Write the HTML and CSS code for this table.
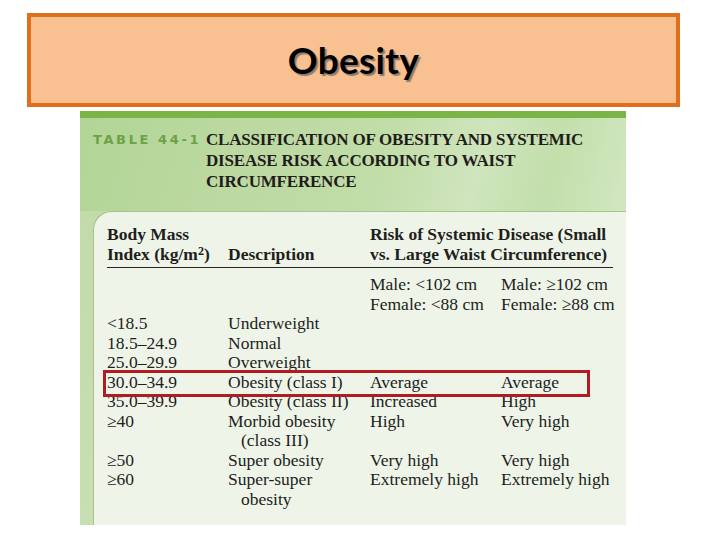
FILE: index.html
```html
<!DOCTYPE html>
<html>
<head>
<meta charset="utf-8">
<link rel="stylesheet" href="styles.css">
</head>
<body>
<div class="slide">
  <div class="title-box"><h1 class="title">Obesity</h1></div>
  <div class="figure">
    <div class="fig-head">
      <span class="tag">TABLE 44-1</span>
      <div class="caption">CLASSIFICATION OF OBESITY AND SYSTEMIC<br>DISEASE RISK ACCORDING TO WAIST<br>CIRCUMFERENCE</div>
    </div>
    <div class="fig-body">
      <div class="panel">
        <div class="row head">
          <div>Body Mass<br>Index (kg/m<span class="sup">2</span>)</div>
          <div class="bottom">Description</div>
          <div class="wide">Risk of Systemic Disease (Small<br>vs. Large Waist Circumference)</div>
        </div>
        <div class="row sub">
          <div></div><div></div>
          <div>Male: &lt;102 cm<br>Female: &lt;88 cm</div>
          <div>Male: ≥102 cm<br>Female: ≥88 cm</div>
        </div>
        <div class="row"><div>&lt;18.5</div><div>Underweight</div><div></div><div></div></div>
        <div class="row"><div>18.5–24.9</div><div>Normal</div><div></div><div></div></div>
        <div class="row"><div>25.0–29.9</div><div>Overweight</div><div></div><div></div></div>
        <div class="row mark"><div>30.0–34.9</div><div>Obesity (class I)</div><div>Average</div><div>Average</div></div>
        <div class="row"><div>35.0–39.9</div><div>Obesity (class II)</div><div>Increased</div><div>High</div></div>
        <div class="row"><div>≥40</div><div class="hang">Morbid obesity<br>(class III)</div><div>High</div><div>Very high</div></div>
        <div class="row"><div>≥50</div><div>Super obesity</div><div>Very high</div><div>Very high</div></div>
        <div class="row"><div>≥60</div><div class="hang">Super-super<br>obesity</div><div>Extremely high</div><div>Extremely high</div></div>
      </div>
    </div>
  </div>
</div>
</body>
</html>
```
FILE: styles.css
```css
html, body {
  margin: 0;
  padding: 0;
  background: #ffffff;
}
.slide {
  width: 720px;
  height: 540px;
  padding-top: 13px;
  box-sizing: border-box;
  display: flex;
  flex-direction: column;
}
.title-box {
  margin-left: 27px;
  width: 653px;
  height: 94px;
  box-sizing: border-box;
  border: 4px solid #df6f1d;
  background: #f9c192;
  display: flex;
  align-items: center;
  justify-content: center;
}
.title {
  margin: 0;
  font-family: "Lato", "Open Sans", sans-serif;
  font-weight: 700;
  font-size: 37px;
  letter-spacing: 0.3px;
  color: #000;
  text-shadow: 2px 2px 1px #8a7a6e;
  padding-bottom: 2px;
}
.figure {
  margin-left: 80px;
  margin-top: 4px;
  width: 546px;
  height: 414px;
  display: flex;
  flex-direction: column;
  overflow: hidden;
}
.fig-head {
  height: 100px;
  box-sizing: border-box;
  border-top: 7px solid #79b547;
  background: linear-gradient(105deg, #b2d596 0%, #bcd9a2 30%, #c1dda8 55%, #cfe5bd 72%, #c3dfab 85%, #d2e7c1 100%);
  display: flex;
  padding: 11px 0 0 13px;
}
.tag {
  width: 113px;
  font-family: "DejaVu Sans", sans-serif;
  font-weight: 700;
  font-size: 13px;
  letter-spacing: 2.6px;
  color: #6ca246;
  line-height: 21px;
}
.caption {
  font-family: "Liberation Serif", serif;
  font-weight: 700;
  font-size: 17px;
  line-height: 21px;
  letter-spacing: -0.2px;
  color: #1f1c1a;
}
.fig-body {
  flex: 1;
  background: linear-gradient(180deg, #c2dba9 0%, #c8dfb2 100%);
  padding-left: 13px;
  display: flex;
}
.panel {
  flex: 1;
  min-width: 0;
  background: #eff4e9;
  border-top-left-radius: 18px;
  box-shadow: inset 1px 1px 0 #a8c48c;
  padding: 14px 13px 0 14px;
  font-family: "Liberation Serif", serif;
  font-size: 17.5px;
  line-height: 19.5px;
  color: #211e1c;
  white-space: nowrap;
}
.row {
  display: grid;
  grid-template-columns: 121px 142px 131px 1fr;
}
.row.head {
  font-weight: 700;
  border-bottom: 1.5px solid #2a2624;
  padding-bottom: 3px;
  margin-bottom: 7px;
}
.row.head .bottom {
  align-self: end;
}
.row.head .wide {
  grid-column: 3 / 5;
}
.sup {
  font-size: 12px;
  vertical-align: 5px;
  line-height: 0;
}
.hang {
  padding-left: 13px;
  text-indent: -13px;
}
.row.mark {
  position: relative;
}
.row.mark::after {
  content: "";
  position: absolute;
  left: -4px;
  right: 23px;
  top: -3px;
  bottom: -5px;
  border: 3px solid #b01c22;
}
```
